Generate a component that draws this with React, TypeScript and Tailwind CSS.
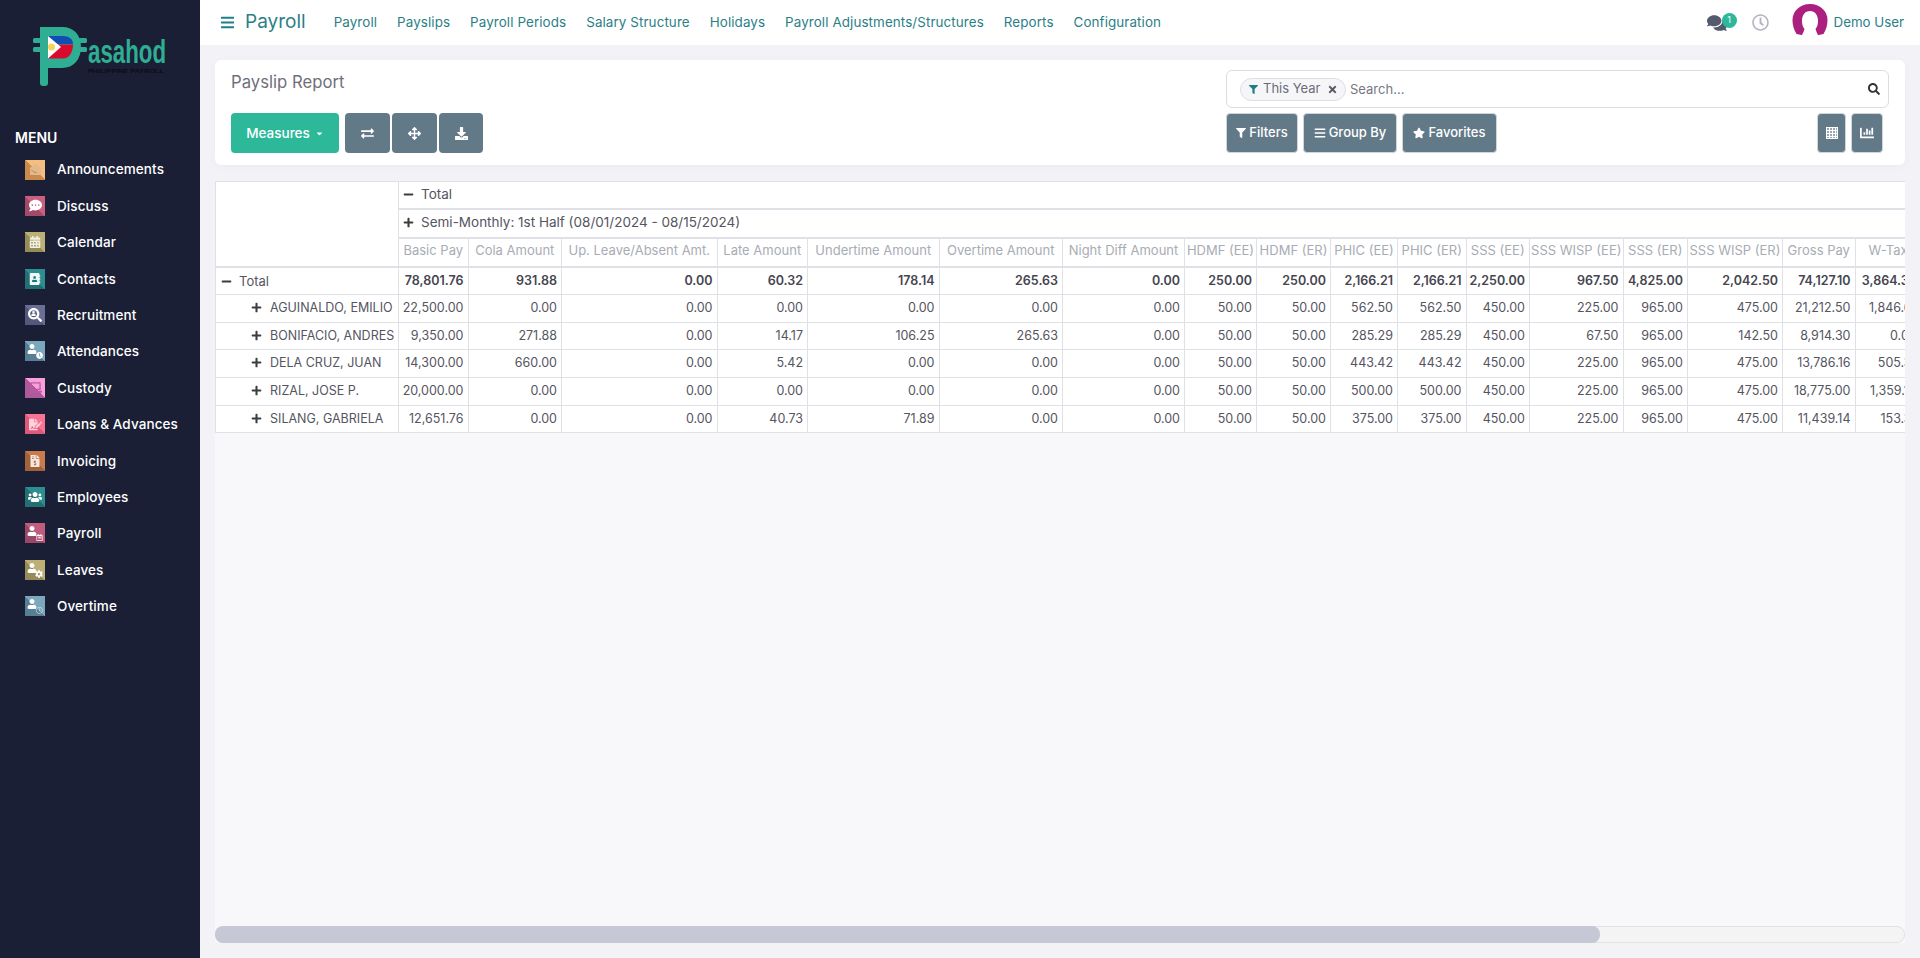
import type { ReactElement, ReactNode } from "react";
import {
  FaAddressBook,
  FaArrowsAlt,
  FaBars,
  FaCalendarAlt,
  FaCaretDown,
  FaChartBar,
  FaClock,
  FaCog,
  FaCommentDots,
  FaComments,
  FaDownload,
  FaEnvelopeOpen,
  FaExchangeAlt,
  FaFileInvoiceDollar,
  FaFileSignature,
  FaFilter,
  FaLaptop,
  FaMinus,
  FaPlus,
  FaRegCalendarAlt,
  FaRegClock,
  FaSearch,
  FaStar,
  FaTimes,
  FaUser,
  FaUsers,
} from "react-icons/fa";

const apps: { label: string; bg: string; icon: ReactNode }[] = [
  {
    label: "Announcements",
    bg: "bg-[linear-gradient(45deg,#c98a4c_50%,#f6bd7f_50%)]",
    icon: <FaEnvelopeOpen className="size-[11px] text-[#e2b88d]" />,
  },
  {
    label: "Discuss",
    bg: "bg-[linear-gradient(45deg,#a44a68_50%,#cb5f81_50%)]",
    icon: <FaCommentDots className="size-[13px] text-white" />,
  },
  {
    label: "Calendar",
    bg: "bg-[linear-gradient(45deg,#968c5a_50%,#bcb077_50%)]",
    icon: <FaCalendarAlt className="size-[12px] text-[#f1efe2]" />,
  },
  {
    label: "Contacts",
    bg: "bg-[linear-gradient(45deg,#226f74_50%,#2c8e8f_50%)]",
    icon: <FaAddressBook className="size-[12px] text-[#eef6f6]" />,
  },
  {
    label: "Recruitment",
    bg: "bg-[linear-gradient(45deg,#54587a_50%,#6a6e93_50%)]",
    icon: (
      <span className="relative block size-[14px]">
        <FaSearch className="size-[14px] text-white" />
        <FaUser className="absolute left-[3px] top-[2.500px] size-[5px] text-white" />
      </span>
    ),
  },
  {
    label: "Attendances",
    bg: "bg-[linear-gradient(45deg,#567e94_50%,#7ba8bd_50%)]",
    icon: <UserWith icon={<FaClock className="size-[7px] text-white" />} />,
  },
  {
    label: "Custody",
    bg: "bg-[linear-gradient(45deg,#b0589c_50%,#fb9fdc_50%)]",
    icon: <FaLaptop className="size-[13px] text-[#b65c9f]" />,
  },
  {
    label: "Loans & Advances",
    bg: "bg-[linear-gradient(45deg,#e0587a_50%,#fb7394_50%)]",
    icon: <FaFileSignature className="size-[13px] text-[#fbd3dd]" />,
  },
  {
    label: "Invoicing",
    bg: "bg-[linear-gradient(45deg,#a2623a_50%,#c97b4c_50%)]",
    icon: <FaFileInvoiceDollar className="size-[12px] text-[#f6e8df]" />,
  },
  {
    label: "Employees",
    bg: "bg-[linear-gradient(45deg,#226f74_50%,#2c8e8f_50%)]",
    icon: <FaUsers className="size-[14px] text-white" />,
  },
  {
    label: "Payroll",
    bg: "bg-[linear-gradient(45deg,#9c4668_50%,#c25b7d_50%)]",
    icon: <UserWith icon={<FaRegCalendarAlt className="size-[7px] text-white" />} />,
  },
  {
    label: "Leaves",
    bg: "bg-[linear-gradient(45deg,#968c5a_50%,#bcb077_50%)]",
    icon: <UserWith icon={<FaCog className="size-[8px] text-white" />} />,
  },
  {
    label: "Overtime",
    bg: "bg-[linear-gradient(45deg,#567e94_50%,#7ba8bd_50%)]",
    icon: <UserWith icon={<FaRegClock className="size-[7px] text-[#c6d8e2]" />} />,
  },
];

const navLinks = [
  "Payroll",
  "Payslips",
  "Payroll Periods",
  "Salary Structure",
  "Holidays",
  "Payroll Adjustments/Structures",
  "Reports",
  "Configuration",
];

const columns = [
  { label: "Basic Pay", width: "w-[69.5px]" },
  { label: "Cola Amount", width: "w-[93.5px]" },
  { label: "Up. Leave/Absent Amt.", width: "w-[155.5px]" },
  { label: "Late Amount", width: "w-[90.5px]" },
  { label: "Undertime Amount", width: "w-[131.5px]" },
  { label: "Overtime Amount", width: "w-[123.5px]" },
  { label: "Night Diff Amount", width: "w-[122px]" },
  { label: "HDMF (EE)", width: "w-[72px]" },
  { label: "HDMF (ER)", width: "w-[74px]" },
  { label: "PHIC (EE)", width: "w-[67px]" },
  { label: "PHIC (ER)", width: "w-[68.5px]" },
  { label: "SSS (EE)", width: "w-[63.5px]" },
  { label: "SSS WISP (EE)", width: "w-[93.5px]" },
  { label: "SSS (ER)", width: "w-[64.5px]" },
  { label: "SSS WISP (ER)", width: "w-[95px]" },
  { label: "Gross Pay", width: "w-[72.5px]" },
  { label: "W-Tax", width: "w-[66px]" },
];

const totals = ["78,801.76", "931.88", "0.00", "60.32", "178.14", "265.63", "0.00", "250.00", "250.00", "2,166.21", "2,166.21", "2,250.00", "967.50", "4,825.00", "2,042.50", "74,127.10", "3,864.33"];

const rows: { name: string; values: string[] }[] = [
  { name: "AGUINALDO, EMILIO", values: ["22,500.00", "0.00", "0.00", "0.00", "0.00", "0.00", "0.00", "50.00", "50.00", "562.50", "562.50", "450.00", "225.00", "965.00", "475.00", "21,212.50", "1,846.61"] },
  { name: "BONIFACIO, ANDRES", values: ["9,350.00", "271.88", "0.00", "14.17", "106.25", "265.63", "0.00", "50.00", "50.00", "285.29", "285.29", "450.00", "67.50", "965.00", "142.50", "8,914.30", "0.00"] },
  { name: "DELA CRUZ, JUAN", values: ["14,300.00", "660.00", "0.00", "5.42", "0.00", "0.00", "0.00", "50.00", "50.00", "443.42", "443.42", "450.00", "225.00", "965.00", "475.00", "13,786.16", "505.31"] },
  { name: "RIZAL, JOSE P.", values: ["20,000.00", "0.00", "0.00", "0.00", "0.00", "0.00", "0.00", "50.00", "50.00", "500.00", "500.00", "450.00", "225.00", "965.00", "475.00", "18,775.00", "1,359.10"] },
  { name: "SILANG, GABRIELA", values: ["12,651.76", "0.00", "0.00", "40.73", "71.89", "0.00", "0.00", "50.00", "50.00", "375.00", "375.00", "450.00", "225.00", "965.00", "475.00", "11,439.14", "153.31"] },
];

function UserWith({ icon }: { icon: ReactNode }): ReactElement {
  return (
    <span className="relative block size-[16px]">
      <FaUser className="absolute left-0 top-[1px] size-[10px] text-white" />
      <span className="absolute bottom-0 right-0">{icon}</span>
    </span>
  );
}

function Logo(): ReactElement {
  return (
    <svg viewBox="33 27 134 60" className="block h-[60px] w-[134px]">
      <path
        d="M40 27h22c12 0 19 8 19 20s-7 21-19 21H48v15c0 2-1 3-3 3h-2c-2 0-3-1-3-3z"
        fill="#2fae93"
      />
      <rect x="33" y="38" width="9" height="5" rx="1.5" fill="#2fae93" />
      <rect x="33" y="47" width="9" height="5" rx="1.5" fill="#2fae93" />
      <rect x="78" y="38" width="9" height="5" rx="1.5" fill="#2fae93" />
      <rect x="78" y="47" width="9" height="5" rx="1.5" fill="#2fae93" />
      <path d="M48 36h15c6 0 10 3 10 8H48z" fill="#0f4fb5" />
      <path d="M48 44.500h25c0 8-4 14-10 14H48z" fill="#d90b2c" />
      <path d="M48 36l13 11-13 11.500z" fill="#ffffff" />
      <circle cx="51.500" cy="47" r="3.500" fill="#f6d458" />
      <text
        x="88"
        y="63"
        fontFamily="'Liberation Sans', sans-serif"
        fontWeight="700"
        fontSize="33"
        textLength="78"
        lengthAdjust="spacingAndGlyphs"
        fill="#2fae93"
      >
        asahod
      </text>
      <text
        x="88"
        y="72.500"
        fontFamily="'Liberation Sans', sans-serif"
        fontWeight="700"
        fontSize="6"
        textLength="76"
        lengthAdjust="spacingAndGlyphs"
        fill="#0b0d14"
      >
        PHILIPPINE PAYROLL
      </text>
    </svg>
  );
}

function Sidebar(): ReactElement {
  return (
    <aside className="flex w-[200px] shrink-0 flex-col bg-[#1a1f36]">
      <div className="pl-[33px] pt-[27px]">
        <Logo />
      </div>
      <div className="pl-[15px] pt-[41px] text-[14px] font-semibold leading-[20px] text-white">MENU</div>
      <ul className="flex flex-col gap-[16.400px] pl-[25px] pt-[11.500px]">
        {apps.map((a) => (
          <li key={a.label} className="flex h-[20px] items-center gap-[12px]">
            <span className={`flex size-[20px] items-center justify-center ${a.bg}`}>{a.icon}</span>
            <span className="text-[13.500px] font-medium tracking-[0.1px] text-white">{a.label}</span>
          </li>
        ))}
      </ul>
    </aside>
  );
}

function TopBar(): ReactElement {
  return (
    <header className="flex h-[45px] shrink-0 items-center bg-white pl-[20px] pr-[16px]">
      <FaBars className="size-[15px] text-[#1f7f86]" />
      <span className="ml-[10px] text-[19px] text-[#2a7f86]">Payroll</span>
      <nav className="ml-[28px] flex gap-[20px]">
        {navLinks.map((l) => (
          <span key={l} className="text-[13.400px] tracking-[0.1px] text-[#2a7f86]">
            {l}
          </span>
        ))}
      </nav>
      <div className="ml-auto flex items-center">
        <span className="relative flex h-[20px] w-[30px] items-center">
          <FaComments className="size-[20px] text-[#555b6e]" />
          <span className="absolute left-[15px] top-0 flex size-[15px] items-center justify-center rounded-full bg-[#2db89a] text-[9px] text-white">
            1
          </span>
        </span>
        <FaRegClock className="ml-[15px] size-[17px] text-[#b3b5c0]" />
        <svg viewBox="0 0 36 31" className="ml-[23px] h-[31px] w-[36px] -translate-y-[3px]">
          <path d="M18 0C8 0 .5 7 .5 16c0 5 1.500 10 4 14 4 1 8 1.500 13.500 1.500S28 31 31.500 30c2.500-4 4-9 4-14C35.500 7 28 0 18 0z" fill="#ab1f7e" />
          <path d="M18 7c-5 0-8 4-8 10 0 4 1 6 2.500 8-.5 2-1.500 4-2.500 6h16c-1-2-2-4-2.500-6 1.500-2 2.500-4 2.500-8 0-6-3-10-8-10z" fill="#ffffff" />
        </svg>
        <span className="ml-[6px] text-[13.300px] text-[#2a7f86]">Demo User</span>
      </div>
    </header>
  );
}

function GrayButton({ className, children }: { className: string; children: ReactNode }): ReactElement {
  return (
    <span
      className={`flex h-[40px] items-center justify-center gap-[3px] rounded-[4px] border border-[#cfd5d9] bg-[#627a88] text-[13px] font-medium text-white ${className}`}
    >
      {children}
    </span>
  );
}

function ControlPanel(): ReactElement {
  return (
    <section className="mx-[15px] mt-[15px] flex h-[105px] shrink-0 rounded-[6px] bg-white shadow-[0_2px_8px_rgba(40,40,70,0.04)]">
      <div className="flex flex-1 flex-col pl-[16px] pt-[11px]">
        <h1 className="text-[16.700px] leading-[22px] text-[#6f6f7b]">Payslip Report</h1>
        <div className="mt-[20px] flex gap-[2px]">
          <span className="mr-[4px] flex h-[40px] w-[108px] items-center justify-center gap-[5px] rounded-[4px] bg-[#2db89a] text-[13.500px] font-medium text-white">
            Measures
            <FaCaretDown className="size-[9px]" />
          </span>
          <span className="flex h-[40px] w-[45px] items-center justify-center rounded-[4px] bg-[#627a88] text-white">
            <FaExchangeAlt className="size-[13px]" />
          </span>
          <span className="flex h-[40px] w-[45px] items-center justify-center rounded-[4px] bg-[#627a88] text-white">
            <FaArrowsAlt className="size-[13px]" />
          </span>
          <span className="flex h-[40px] w-[44px] items-center justify-center rounded-[4px] bg-[#627a88] text-white">
            <FaDownload className="size-[13px]" />
          </span>
        </div>
      </div>
      <div className="flex w-[679px] flex-col pr-[16px] pt-[10px]">
        <div className="flex h-[38px] items-center rounded-[6px] border border-[#dcdde3] pl-[13px] pr-[8px]">
          <span className="flex h-[23px] w-[106px] items-center rounded-full border border-[#dddde3] bg-[#f6f6f9] pl-[8px] text-[13px] text-[#6c6c78]">
            <FaFilter className="size-[9px] text-[#1f7f86]" />
            <span className="ml-[5px]">This Year</span>
            <FaTimes className="ml-[7px] size-[11px] text-[#5b5b66]" />
          </span>
          <span className="ml-[4px] pt-[2px] text-[13px] text-[#777782]">Search...</span>
          <FaSearch className="ml-auto size-[12px] text-[#333]" />
        </div>
        <div className="mt-[5px] flex">
          <GrayButton className="w-[72px]">
            <FaFilter className="size-[10px]" />
            Filters
          </GrayButton>
          <GrayButton className="ml-[5px] w-[94px]">
            <FaBars className="size-[12px]" />
            Group By
          </GrayButton>
          <GrayButton className="ml-[5px] w-[95px]">
            <FaStar className="size-[12px]" />
            Favorites
          </GrayButton>
          <GrayButton className="ml-auto w-[29px]">
            <svg viewBox="0 0 12 12" className="size-[12px]" fill="none" stroke="currentColor" strokeWidth="1">
              <rect x="0.500" y="0.500" width="11" height="11" fill="rgba(255,255,255,0.35)" />
              <path d="M0 3.500h12M0 6.500h12M0 9.500h12M3.500 0v12M6.500 0v12M9.500 0v12" />
            </svg>
          </GrayButton>
          <GrayButton className="ml-[5px] mr-[6px] w-[32px]">
            <FaChartBar className="size-[14px]" />
          </GrayButton>
        </div>
      </div>
    </section>
  );
}

function PivotTable(): ReactElement {
  const cell = "border border-[#dfe1e6]";
  return (
    <div className="min-h-0 flex-1 overflow-hidden">
      <table className="w-[1705.500px] table-fixed border-collapse bg-white text-[12.500px] text-[#55555f]">
        <colgroup>
          <col className="w-[183px]" />
          {columns.map((c) => (
            <col key={c.label} className={c.width} />
          ))}
        </colgroup>
        <thead>
          <tr className="h-[27.500px]">
            <th rowSpan={3} className={`${cell} border-b-2`} />
            <th colSpan={columns.length} className={`${cell} border-b-2 pb-[2px] pl-[4px] text-left text-[13.500px] font-normal`}>
              <FaMinus className="inline size-[11px] align-[-1px] text-[#3d3d3d]" />
              <span className="ml-[7px]">Total</span>
            </th>
          </tr>
          <tr className="h-[28.500px]">
            <th colSpan={columns.length} className={`${cell} border-b-2 pb-[2px] pl-[4px] text-left text-[13.500px] font-normal`}>
              <FaPlus className="inline size-[11px] align-[-1px] text-[#3d3d3d]" />
              <span className="ml-[7px]">Semi-Monthly: 1st Half (08/01/2024 - 08/15/2024)</span>
            </th>
          </tr>
          <tr className="h-[29px]">
            {columns.map((c) => (
              <th key={c.label} className={`${cell} border-b-2 whitespace-nowrap pb-[2px] text-center text-[13px] font-normal text-[#a8acb4]`}>
                {c.label}
              </th>
            ))}
          </tr>
        </thead>
        <tbody>
          <tr className="h-[28px]">
            <td className={`${cell} pl-[5px] pt-[1px] text-[13px]`}>
              <FaMinus className="inline size-[11px] align-[-1px] text-[#3d3d3d]" />
              <span className="ml-[7px]">Total</span>
            </td>
            {totals.map((v, i) => (
              <td key={i} className={`${cell} whitespace-nowrap pr-[4px] pt-[1px] text-right font-semibold text-[#45454f]`}>
                {v}
              </td>
            ))}
          </tr>
          {rows.map((r) => (
            <tr key={r.name} className="h-[27.700px]">
              <td className={`${cell} whitespace-nowrap pl-[35px]`}>
                <FaPlus className="inline size-[11px] align-[-1px] text-[#3d3d3d]" />
                <span className="ml-[8px]">{r.name}</span>
              </td>
              {r.values.map((v, i) => (
                <td key={i} className={`${cell} whitespace-nowrap pr-[4px] text-right`}>
                  {v}
                </td>
              ))}
            </tr>
          ))}
        </tbody>
      </table>
    </div>
  );
}

export default function App(): ReactElement {
  return (
    <div className="flex h-[958px] overflow-hidden font-['Inter',sans-serif]">
      <Sidebar />
      <main className="flex min-w-0 flex-1 flex-col bg-[#f3f3f7]">
        <TopBar />
        <ControlPanel />
        <div className="mx-[15px] mt-[16px] mb-[15px] flex min-h-0 flex-1 flex-col bg-[#f8f8fb]">
          <PivotTable />
          <div className="flex h-[17px] shrink-0 rounded-[8px] border border-[#e2e2e6] bg-[#f4f4f4]">
            <div className="-my-px -ml-px h-[17px] w-[1385px] rounded-[8px] bg-[#c6c8d5]" />
          </div>
        </div>
      </main>
    </div>
  );
}
